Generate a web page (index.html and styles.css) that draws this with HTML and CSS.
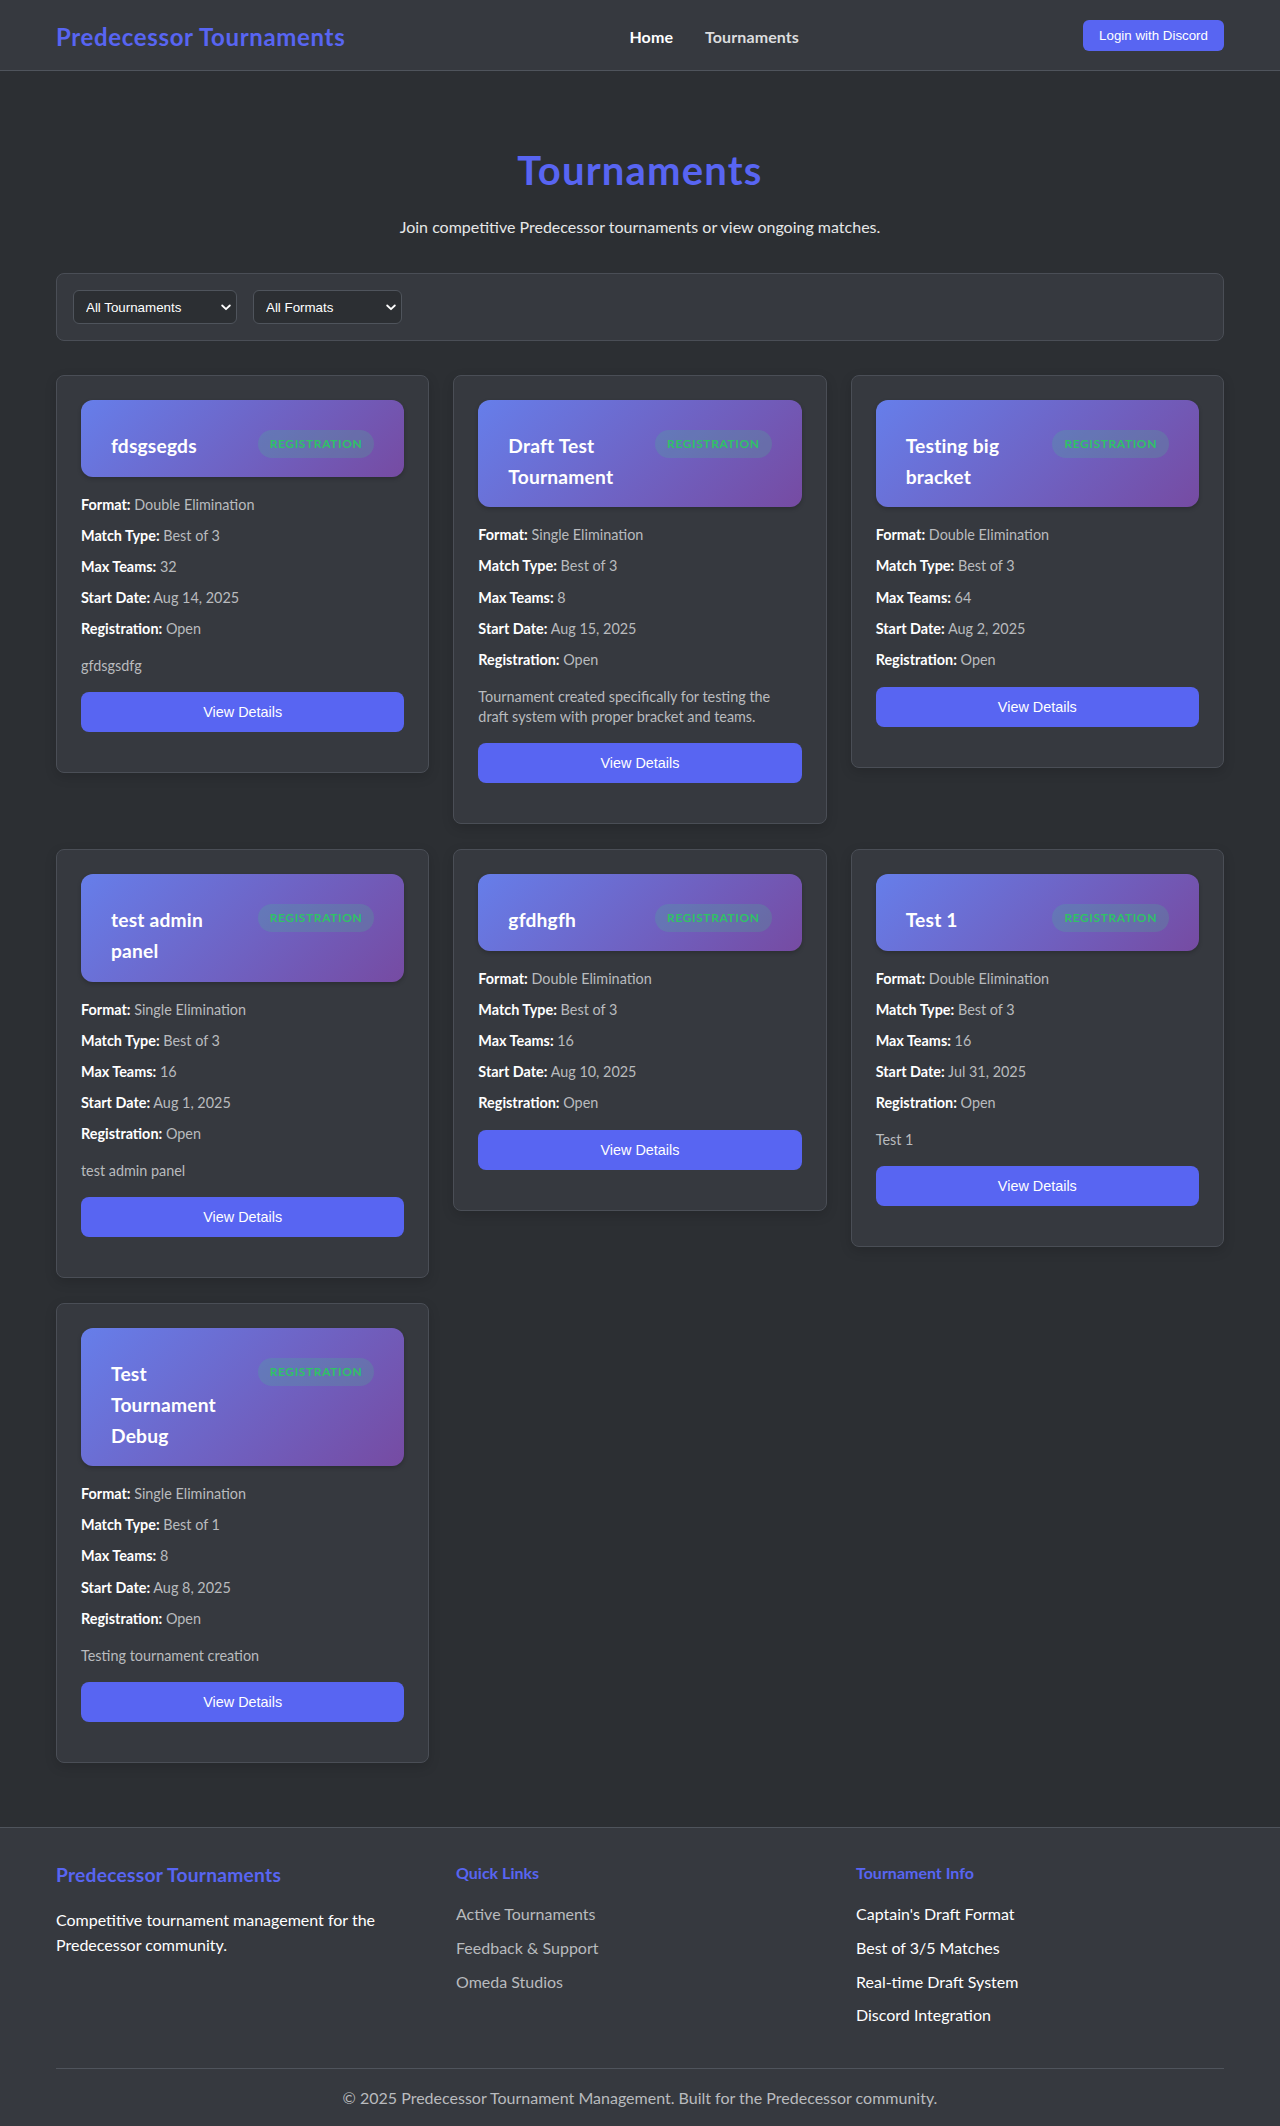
FILE: index.html
```html
<!DOCTYPE html>
<html lang="en">
<head>
<meta charset="utf-8">
<title>Tournaments - Predecessor Tournaments</title>
<link rel="stylesheet" href="styles.css">
</head>
<body>
<header class="site-header">
  <div class="container header-inner">
    <a class="logo" href="#">Predecessor Tournaments</a>
    <nav class="main-nav">
      <a class="nav-link nav-home" href="#">Home</a>
      <a class="nav-link" href="#">Tournaments</a>
    </nav>
    <button class="btn-login">Login with Discord</button>
  </div>
</header>

<main class="main">
  <div class="container">
    <section class="page-head">
      <h1 class="page-title">Tournaments</h1>
      <p class="page-sub">Join competitive Predecessor tournaments or view ongoing matches.</p>
    </section>

    <section class="filters">
      <div class="select-wrap sel-status">
        <select class="filter-select">
          <option>All Tournaments</option>
          <option>Registration Open</option>
          <option>In Progress</option>
          <option>Completed</option>
        </select>
        <svg class="chev" width="10" height="7" viewBox="0 0 10 7"><path d="M1.2 1.5 L5 5.2 L8.8 1.5" fill="none" stroke="#ffffff" stroke-width="1.8" stroke-linecap="round" stroke-linejoin="round"/></svg>
      </div>
      <div class="select-wrap sel-format">
        <select class="filter-select">
          <option>All Formats</option>
          <option>Single Elimination</option>
          <option>Double Elimination</option>
        </select>
        <svg class="chev" width="10" height="7" viewBox="0 0 10 7"><path d="M1.2 1.5 L5 5.2 L8.8 1.5" fill="none" stroke="#ffffff" stroke-width="1.8" stroke-linecap="round" stroke-linejoin="round"/></svg>
      </div>
    </section>

    <section class="grid">
      <article class="card">
        <div class="card-head">
          <h3 class="card-title">fdsgsegds</h3>
          <span class="badge">Registration</span>
        </div>
        <div class="details">
          <p><strong>Format:</strong> Double Elimination</p>
          <p><strong>Match Type:</strong> Best of 3</p>
          <p><strong>Max Teams:</strong> 32</p>
          <p><strong>Start Date:</strong> Aug 14, 2025</p>
          <p><strong>Registration:</strong> Open</p>
        </div>
        <p class="desc">gfdsgsdfg</p>
        <button class="btn-view">View Details</button>
      </article>

      <article class="card">
        <div class="card-head">
          <h3 class="card-title">Draft Test Tournament</h3>
          <span class="badge">Registration</span>
        </div>
        <div class="details">
          <p><strong>Format:</strong> Single Elimination</p>
          <p><strong>Match Type:</strong> Best of 3</p>
          <p><strong>Max Teams:</strong> 8</p>
          <p><strong>Start Date:</strong> Aug 15, 2025</p>
          <p><strong>Registration:</strong> Open</p>
        </div>
        <p class="desc">Tournament created specifically for testing the draft system with proper bracket and teams.</p>
        <button class="btn-view">View Details</button>
      </article>

      <article class="card">
        <div class="card-head">
          <h3 class="card-title">Testing big bracket</h3>
          <span class="badge">Registration</span>
        </div>
        <div class="details">
          <p><strong>Format:</strong> Double Elimination</p>
          <p><strong>Match Type:</strong> Best of 3</p>
          <p><strong>Max Teams:</strong> 64</p>
          <p><strong>Start Date:</strong> Aug 2, 2025</p>
          <p><strong>Registration:</strong> Open</p>
        </div>
        <button class="btn-view">View Details</button>
      </article>

      <article class="card">
        <div class="card-head">
          <h3 class="card-title">test admin panel</h3>
          <span class="badge">Registration</span>
        </div>
        <div class="details">
          <p><strong>Format:</strong> Single Elimination</p>
          <p><strong>Match Type:</strong> Best of 3</p>
          <p><strong>Max Teams:</strong> 16</p>
          <p><strong>Start Date:</strong> Aug 1, 2025</p>
          <p><strong>Registration:</strong> Open</p>
        </div>
        <p class="desc">test admin panel</p>
        <button class="btn-view">View Details</button>
      </article>

      <article class="card">
        <div class="card-head">
          <h3 class="card-title">gfdhgfh</h3>
          <span class="badge">Registration</span>
        </div>
        <div class="details">
          <p><strong>Format:</strong> Double Elimination</p>
          <p><strong>Match Type:</strong> Best of 3</p>
          <p><strong>Max Teams:</strong> 16</p>
          <p><strong>Start Date:</strong> Aug 10, 2025</p>
          <p><strong>Registration:</strong> Open</p>
        </div>
        <button class="btn-view">View Details</button>
      </article>

      <article class="card">
        <div class="card-head">
          <h3 class="card-title">Test 1</h3>
          <span class="badge">Registration</span>
        </div>
        <div class="details">
          <p><strong>Format:</strong> Double Elimination</p>
          <p><strong>Match Type:</strong> Best of 3</p>
          <p><strong>Max Teams:</strong> 16</p>
          <p><strong>Start Date:</strong> Jul 31, 2025</p>
          <p><strong>Registration:</strong> Open</p>
        </div>
        <p class="desc">Test 1</p>
        <button class="btn-view">View Details</button>
      </article>

      <article class="card">
        <div class="card-head">
          <h3 class="card-title">Test Tournament Debug</h3>
          <span class="badge">Registration</span>
        </div>
        <div class="details">
          <p><strong>Format:</strong> Single Elimination</p>
          <p><strong>Match Type:</strong> Best of 1</p>
          <p><strong>Max Teams:</strong> 8</p>
          <p><strong>Start Date:</strong> Aug 8, 2025</p>
          <p><strong>Registration:</strong> Open</p>
        </div>
        <p class="desc">Testing tournament creation</p>
        <button class="btn-view">View Details</button>
      </article>
    </section>
  </div>
</main>

<footer class="site-footer">
  <div class="container">
    <div class="footer-grid">
      <div class="footer-col">
        <h3 class="footer-brand">Predecessor Tournaments</h3>
        <p class="footer-text">Competitive tournament management for the Predecessor community.</p>
      </div>
      <div class="footer-col">
        <h4 class="footer-heading">Quick Links</h4>
        <ul class="footer-list">
          <li><a class="footer-link" href="#">Active Tournaments</a></li>
          <li><a class="footer-link" href="#">Feedback &amp; Support</a></li>
          <li><a class="footer-link" href="#">Omeda Studios</a></li>
        </ul>
      </div>
      <div class="footer-col">
        <h4 class="footer-heading">Tournament Info</h4>
        <ul class="footer-list info-list">
          <li>Captain's Draft Format</li>
          <li>Best of 3/5 Matches</li>
          <li>Real-time Draft System</li>
          <li>Discord Integration</li>
        </ul>
      </div>
    </div>
    <div class="footer-bottom">
      <p>&copy; 2025 Predecessor Tournament Management. Built for the Predecessor community.</p>
    </div>
  </div>
</footer>
</body>
</html>
```

FILE: styles.css
```css
* {
  box-sizing: border-box;
}

body {
  margin: 0;
  background: #2c2f33;
  color: #dcddde;
  font-family: "Lato", "Noto Sans", sans-serif;
  font-size: 16px;
  line-height: 1.6;
}

a {
  text-decoration: none;
}

.container {
  max-width: 1200px;
  margin: 0 auto;
  padding: 0 16px;
}

/* Header */
.site-header {
  background: #36393f;
  border-bottom: 1px solid #4f545c;
}

.header-inner {
  height: 70px;
  display: flex;
  align-items: center;
  justify-content: space-between;
}

.logo {
  padding-top: 4px;
  color: #5865f2;
  font-size: 24px;
  font-weight: 700;
  line-height: 1.2;
  letter-spacing: 0.65px;
}

.main-nav {
  display: flex;
  gap: 32px;
  padding-top: 3px;
}

.nav-link {
  color: #dcddde;
  font-weight: 700;
  font-size: 16px;
  letter-spacing: 0.1px;
}

.nav-home {
  color: #ffffff;
}

.btn-login {
  background: #5865f2;
  color: #ffffff;
  border: none;
  border-radius: 6px;
  padding: 8px 16px;
  font-family: "Liberation Sans", Arial, sans-serif;
  font-size: 13.33px;
  line-height: 15px;
  cursor: pointer;
}

/* Page head */
.main {
  padding: 0 0 64px;
}

.page-head {
  text-align: center;
  padding-top: 75px;
  margin-bottom: 33.7px;
}

.page-title {
  margin: 0 0 20px;
  color: #5865f2;
  font-size: 40px;
  font-weight: 700;
  line-height: 48px;
  letter-spacing: 1.2px;
}

.page-sub {
  margin: 0;
  color: #e6e7e8;
  font-size: 16px;
  line-height: 25.6px;
}

/* Filters */
.filters {
  display: flex;
  gap: 16px;
  padding: 16px;
  background: #36393f;
  border: 1px solid #4a4e56;
  border-radius: 8px;
  margin-bottom: 33.7px;
}

.select-wrap {
  position: relative;
}

.sel-status {
  width: 164px;
}

.sel-format {
  width: 149px;
}

.filter-select {
  appearance: none;
  -webkit-appearance: none;
  width: 100%;
  height: 34px;
  padding: 0 30px 0 12px;
  background: #2c2f33;
  color: #ffffff;
  border: 1px solid #4f545c;
  border-radius: 6px;
  font-family: "Liberation Sans", Arial, sans-serif;
  font-size: 13.33px;
}

.chev {
  position: absolute;
  right: 6px;
  top: 14px;
  pointer-events: none;
}

/* Cards grid */
.grid {
  display: grid;
  grid-template-columns: repeat(3, 1fr);
  gap: 25px 24px;
  align-items: start;
}

.card {
  background: #36393f;
  border: 1px solid #4a4e56;
  border-radius: 8px;
  padding: 24px;
  box-shadow: 0 4px 12px rgba(0, 0, 0, 0.15);
}

.card-head {
  display: flex;
  justify-content: space-between;
  align-items: flex-start;
  gap: 16px;
  padding: 31px 30px 15px;
  margin-bottom: 16px;
  border-radius: 12px;
  background: linear-gradient(135deg, #667eea 0%, #764ba2 100%);
  box-shadow: 0 2px 4px rgba(0, 0, 0, 0.2);
}

.card-title {
  flex: 1 1 0;
  min-width: 0;
  margin: 0;
  color: #ffffff;
  font-size: 19.2px;
  font-weight: 700;
  line-height: 30.72px;
  letter-spacing: 0.2px;
}

.badge {
  flex-shrink: 0;
  margin-top: -1px;
  padding: 4px 12px;
  border-radius: 20px;
  background: rgba(70, 190, 140, 0.22);
  color: #2fc266;
  font-size: 12px;
  font-weight: 700;
  line-height: 20px;
  letter-spacing: 0.6px;
  text-transform: uppercase;
  white-space: nowrap;
}

.details {
  margin: 16px 0;
}

.details p {
  margin: 8px 0;
  font-size: 14.4px;
  line-height: 23.04px;
  color: #b9bbbe;
}

.details strong {
  color: #ffffff;
  font-weight: 700;
}

.desc {
  margin: 16px 0;
  font-size: 14.4px;
  line-height: 20.3px;
  color: #b9bbbe;
}

.btn-view {
  display: block;
  width: 100%;
  margin-bottom: 16px;
  padding: 12px 0;
  background: #5865f2;
  color: #ffffff;
  border: none;
  border-radius: 8px;
  font-family: "Liberation Sans", Arial, sans-serif;
  font-size: 14.4px;
  line-height: 16px;
  cursor: pointer;
}

/* Footer */
.site-footer {
  background: #36393f;
  border-top: 1px solid #4f545c;
  padding: 32px 0 16px;
}

.footer-grid {
  display: grid;
  grid-template-columns: repeat(3, 1fr);
  gap: 32px;
}

.footer-brand {
  margin: 0 0 16px;
  color: #5865f2;
  font-size: 19.2px;
  font-weight: 700;
  line-height: 30.72px;
  letter-spacing: 0.25px;
}

.footer-text {
  margin: 0;
  color: #ffffff;
}

.footer-heading {
  margin: 0 0 16px;
  color: #5865f2;
  font-size: 16px;
  font-weight: 700;
  line-height: 25.6px;
}

.footer-list {
  list-style: none;
  margin: 0;
  padding: 0;
}

.footer-list li {
  margin-bottom: 8px;
}

.footer-link {
  color: #b9bbbe;
}

.info-list li {
  color: #ffffff;
}

.footer-bottom {
  margin-top: 32px;
  padding-top: 16px;
  border-top: 1px solid #4f545c;
  text-align: center;
}

.footer-bottom p {
  margin: 0;
  color: #b9bbbe;
}
```
